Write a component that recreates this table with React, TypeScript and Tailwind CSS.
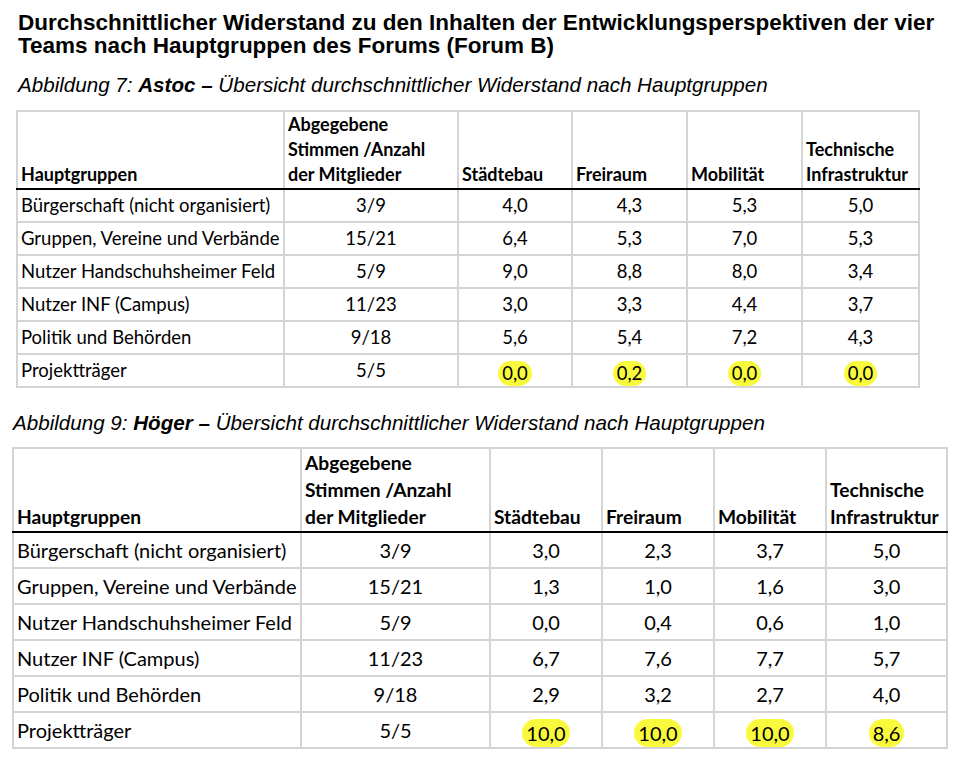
type Row = string[];

const astoc: Row[] = [
  ['Bürgerschaft (nicht organisiert)', '3/9', '4,0', '4,3', '5,3', '5,0'],
  ['Gruppen, Vereine und Verbände', '15/21', '6,4', '5,3', '7,0', '5,3'],
  ['Nutzer Handschuhsheimer Feld', '5/9', '9,0', '8,8', '8,0', '3,4'],
  ['Nutzer INF (Campus)', '11/23', '3,0', '3,3', '4,4', '3,7'],
  ['Politik und Behörden', '9/18', '5,6', '5,4', '7,2', '4,3'],
  ['Projektträger', '5/5', '0,0', '0,2', '0,0', '0,0'],
];

const hoeger: Row[] = [
  ['Bürgerschaft (nicht organisiert)', '3/9', '3,0', '2,3', '3,7', '5,0'],
  ['Gruppen, Vereine und Verbände', '15/21', '1,3', '1,0', '1,6', '3,0'],
  ['Nutzer Handschuhsheimer Feld', '5/9', '0,0', '0,4', '0,6', '1,0'],
  ['Nutzer INF (Campus)', '11/23', '6,7', '7,6', '7,7', '5,7'],
  ['Politik und Behörden', '9/18', '2,9', '3,2', '2,7', '4,0'],
  ['Projektträger', '5/5', '10,0', '10,0', '10,0', '8,6'],
];

const calibri = { fontFamily: 'Lato, "Open Sans", sans-serif' };
const arial = { fontFamily: '"Liberation Sans", Arial, sans-serif' };

type Variant = {
  table: string;
  cols: number[];
  head: string;
  headText: string;
  row: string;
  text: string;
  pill: string;
};

const small: Variant = {
  table: 'ml-[16px] w-[902px] text-[18.5px]',
  cols: [267, 174, 114, 115, 115, 117],
  head: 'h-[77px] leading-[25px]',
  headText: 'text-[18px]',
  row: 'h-[33px]',
  text: 'leading-[25px]',
  pill: 'px-[4px] leading-[25px] translate-y-[3px]',
};

const large: Variant = {
  table: 'ml-[12px] w-[934px] text-[20px]',
  cols: [288, 189, 112, 112, 112, 121],
  head: 'h-[84px] leading-[27px]',
  headText: 'text-[19.2px]',
  row: 'h-[36px]',
  text: 'leading-[27px]',
  pill: 'px-[4px] leading-[28px] translate-y-[3px]',
};

function Table({ rows, v }: { rows: Row[]; v: Variant }) {
  const th = `border-2 border-[#d4d4d4] border-b-black px-[3px] pb-[1px] text-left align-bottom font-bold ${v.headText}`;
  return (
    <table className={`table-fixed border-collapse text-black ${v.table}`} style={calibri}>
      <colgroup>
        {v.cols.map((w, i) => (
          <col key={i} style={{ width: w }} />
        ))}
      </colgroup>
      <thead>
        <tr className={v.head}>
          <th className={th}>Hauptgruppen</th>
          <th className={th}>
            Abgegebene
            <br />
            Stimmen /Anzahl
            <br />
            der Mitglieder
          </th>
          <th className={th}>Städtebau</th>
          <th className={th}>Freiraum</th>
          <th className={th}>Mobilität</th>
          <th className={th}>
            Technische
            <br />
            Infrastruktur
          </th>
        </tr>
      </thead>
      <tbody>
        {rows.map((r, ri) => {
          const last = ri === rows.length - 1;
          return (
            <tr key={ri} className={v.row}>
              {r.map((c, ci) => (
                <td
                  key={ci}
                  className={`border-2 border-[#d4d4d4] px-[3px] py-0 whitespace-nowrap ${v.text} ${
                    ci === 0 ? 'text-left' : 'text-center'
                  }`}
                >
                  {last && ci > 1 ? (
                    <span className={`inline-block rounded-full bg-[#fafa3c] ${v.pill}`}>{c}</span>
                  ) : (
                    c
                  )}
                </td>
              ))}
            </tr>
          );
        })}
      </tbody>
    </table>
  );
}

export default function App() {
  return (
    <div className="h-[758px] w-[958px] overflow-hidden bg-white text-black">
      <h1 className="ml-[18px] pt-[11px] text-[22.5px] font-bold leading-[23px]" style={arial}>
        Durchschnittlicher Widerstand zu den Inhalten der Entwicklungsperspektiven der vier
        <br />
        Teams nach Hauptgruppen des Forums (Forum B)
      </h1>

      <p className="ml-[18px] mt-[16px] text-[20.6px] italic leading-[24px]" style={arial}>
        Abbildung 7: <span className="font-bold">Astoc –</span> Übersicht durchschnittlicher Widerstand nach
        Hauptgruppen
      </p>

      <div className="mt-[13px]">
        <Table rows={astoc} v={small} />
      </div>

      <p className="ml-[13px] mt-[23px] text-[20.6px] italic leading-[24px]" style={arial}>
        Abbildung 9: <span className="font-bold">Höger –</span> Übersicht durchschnittlicher Widerstand nach
        Hauptgruppen
      </p>

      <div className="mt-[12px]">
        <Table rows={hoeger} v={large} />
      </div>
    </div>
  );
}
